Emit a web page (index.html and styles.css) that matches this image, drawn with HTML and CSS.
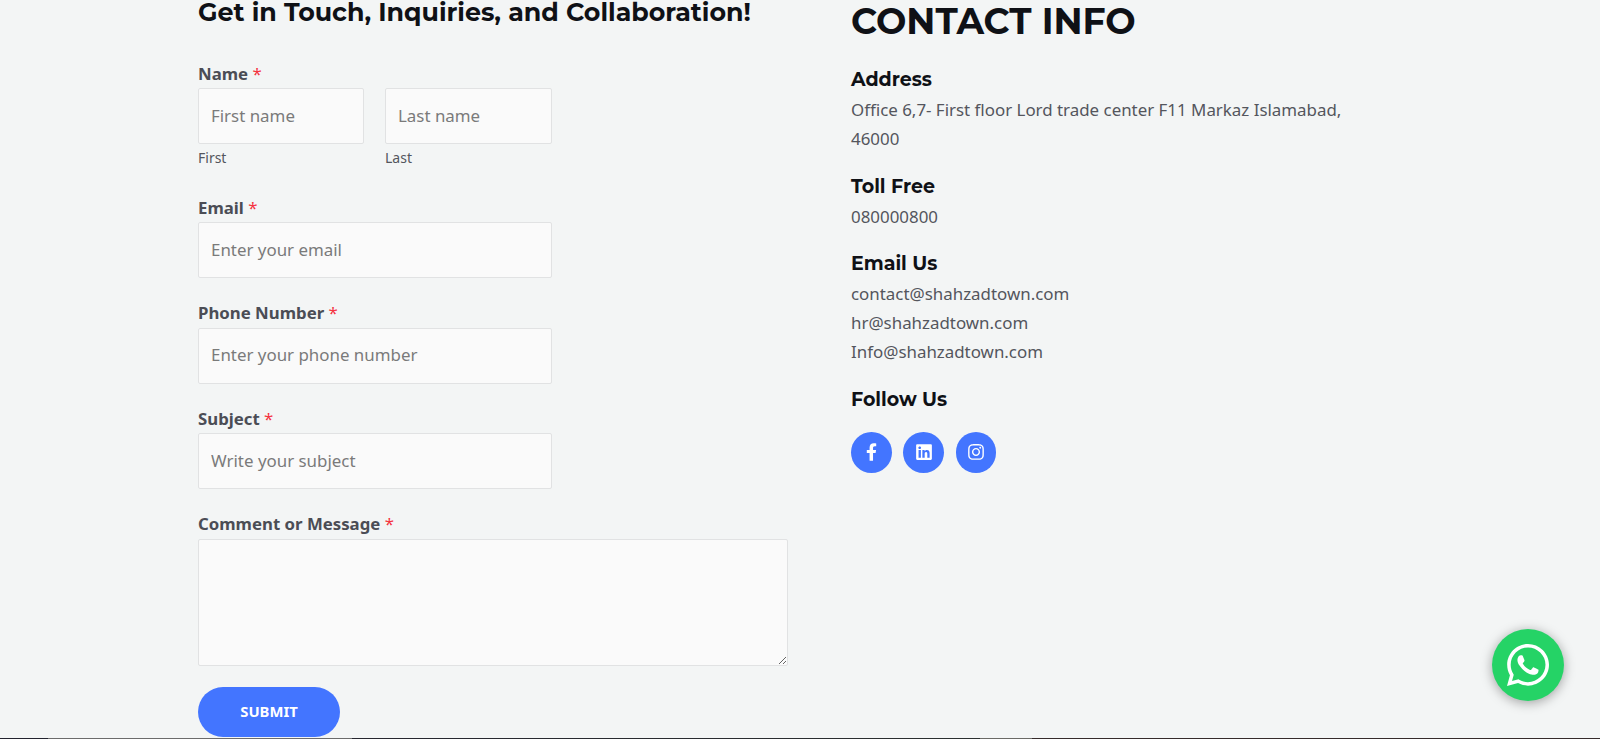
FILE: index.html
```html
<!DOCTYPE html>
<html lang="en">
<head>
<meta charset="utf-8">
<title>Contact</title>
<link rel="stylesheet" href="styles.css">
</head>
<body>
<main class="page">
  <section class="form-col">
    <h2 class="form-title">Get in Touch, Inquiries, and Collaboration!</h2>
    <form class="form">
      <div class="field">
        <label class="label">Name <span class="req">*</span></label>
        <div class="name-row">
          <div class="name-part">
            <input class="input" type="text" placeholder="First name">
            <span class="sub">First</span>
          </div>
          <div class="name-part">
            <input class="input" type="text" placeholder="Last name">
            <span class="sub">Last</span>
          </div>
        </div>
      </div>
      <div class="field">
        <label class="label">Email <span class="req">*</span></label>
        <input class="input short" type="text" placeholder="Enter your email">
      </div>
      <div class="field">
        <label class="label">Phone Number <span class="req">*</span></label>
        <input class="input short" type="text" placeholder="Enter your phone number">
      </div>
      <div class="field">
        <label class="label">Subject <span class="req">*</span></label>
        <input class="input short" type="text" placeholder="Write your subject">
      </div>
      <div class="field field-last">
        <label class="label">Comment or Message <span class="req">*</span></label>
        <textarea class="textarea"></textarea>
      </div>
      <button class="submit" type="button">SUBMIT</button>
    </form>
  </section>
  <section class="info-col">
    <h1 class="info-title">CONTACT INFO</h1>
    <h3 class="info-head">Address</h3>
    <p class="info-text">Office 6,7- First floor Lord trade center F11 Markaz Islamabad, 46000</p>
    <h3 class="info-head">Toll Free</h3>
    <p class="info-text">080000800</p>
    <h3 class="info-head">Email Us</h3>
    <p class="info-text">contact@shahzadtown.com<br>hr@shahzadtown.com<br>Info@shahzadtown.com</p>
    <h3 class="info-head">Follow Us</h3>
    <div class="socials">
      <a class="social" href="#" aria-label="Facebook">
        <svg class="fb" viewBox="0 0 320 512"><path d="M279.14 288l14.22-92.66h-88.91v-60.13c0-25.35 12.42-50.06 52.24-50.06h40.42V6.26S260.43 0 225.36 0c-73.22 0-121.08 44.38-121.08 124.72v70.62H22.89V288h81.39v224h100.17V288z"/></svg>
      </a>
      <a class="social" href="#" aria-label="LinkedIn">
        <svg class="li" viewBox="0 0 448 512"><path d="M416 32H31.9C14.3 32 0 46.5 0 64.3v383.4C0 465.5 14.3 480 31.9 480H416c17.6 0 32-14.5 32-32.3V64.3c0-17.8-14.4-32.3-32-32.3zM135.4 416H69V202.2h66.5V416zm-33.2-243c-21.3 0-38.5-17.3-38.5-38.5S80.9 96 102.2 96c21.2 0 38.5 17.3 38.5 38.5 0 21.3-17.2 38.5-38.5 38.5zm282.1 243h-66.4V312c0-24.8-.5-56.7-34.5-56.7-34.6 0-39.9 27-39.9 54.9V416h-66.4V202.2h63.7v29.2h.9c8.9-16.8 30.6-34.5 62.9-34.5 67.2 0 79.7 44.3 79.7 101.9V416z"/></svg>
      </a>
      <a class="social" href="#" aria-label="Instagram">
        <svg class="ig" viewBox="0 0 448 512"><path d="M224.1 141c-63.6 0-114.9 51.3-114.9 114.9s51.3 114.9 114.9 114.9S339 319.5 339 255.9 287.7 141 224.1 141zm0 189.6c-41.1 0-74.7-33.5-74.7-74.7s33.5-74.7 74.7-74.7 74.7 33.5 74.7 74.7-33.6 74.7-74.7 74.7zm146.4-194.3c0 14.9-12 26.8-26.8 26.8-14.9 0-26.8-12-26.8-26.8s12-26.8 26.8-26.8 26.8 12 26.8 26.8zm76.1 27.2c-1.7-35.9-9.9-67.7-36.2-93.9-26.2-26.2-58-34.4-93.9-36.2-37-2.1-147.9-2.1-184.9 0-35.8 1.7-67.6 9.9-93.9 36.1s-34.4 58-36.2 93.9c-2.1 37-2.1 147.9 0 184.9 1.7 35.9 9.9 67.7 36.2 93.9s58 34.4 93.9 36.2c37 2.1 147.9 2.1 184.9 0 35.9-1.7 67.7-9.9 93.9-36.2 26.2-26.2 34.4-58 36.2-93.9 2.1-37 2.1-147.8 0-184.8zM398.8 388c-7.8 19.6-22.9 34.7-42.6 42.6-29.5 11.7-99.5 9-132.1 9s-102.7 2.6-132.1-9c-19.6-7.8-34.7-22.9-42.6-42.6-11.7-29.5-9-99.5-9-132.1s-2.6-102.7 9-132.1c7.8-19.6 22.9-34.7 42.6-42.6 29.5-11.7 99.5-9 132.1-9s102.7-2.6 132.1 9c19.6 7.8 34.7 22.9 42.6 42.6 11.7 29.5 9 99.5 9 132.1s2.7 102.7-9 132.1z"/></svg>
      </a>
    </div>
  </section>
</main>
<div class="footer-edge"></div>
<a class="whatsapp" href="#" aria-label="WhatsApp">
  <svg viewBox="0 0 448 512"><path d="M380.9 97.1C339 55.1 283.2 32 223.9 32c-122.4 0-222 99.6-222 222 0 39.1 10.2 77.3 29.6 111L0 480l117.7-30.9c32.4 17.7 68.9 27 106.1 27h.1c122.3 0 224.1-99.6 224.1-222 0-59.3-25.2-115-67.1-157zm-157 341.6c-33.2 0-65.7-8.9-94-25.7l-6.7-4-69.8 18.3L72 359.2l-4.4-7c-18.5-29.4-28.2-63.3-28.2-98.2 0-101.7 82.8-184.5 184.6-184.5 49.3 0 95.6 19.2 130.4 54.1 34.8 34.9 56.2 81.2 56.1 130.5 0 101.8-84.9 184.6-186.6 184.6zm101.2-138.2c-5.5-2.8-32.8-16.2-37.9-18-5.1-1.9-8.8-2.8-12.5 2.8-3.7 5.6-14.3 18-17.6 21.8-3.2 3.7-6.5 4.2-12 1.4-32.6-16.3-54-29.1-75.5-66-5.7-9.8 5.7-9.1 16.3-30.3 1.8-3.7.9-6.9-.5-9.7-1.4-2.8-12.5-30.1-17.1-41.2-4.5-10.8-9.1-9.3-12.5-9.5-3.2-.2-6.9-.2-10.6-.2-3.7 0-9.7 1.4-14.8 6.9-5.1 5.6-19.4 19-19.4 46.3 0 27.3 19.9 53.7 22.6 57.4 2.8 3.7 39.1 59.7 94.8 83.8 35.2 15.2 49 16.5 66.6 13.9 10.7-1.6 32.8-13.4 37.4-26.4 4.6-13 4.6-24.1 3.2-26.4-1.3-2.5-5-3.9-10.5-6.6z"/></svg>
</a>
</body>
</html>
```
FILE: styles.css
```css
* { box-sizing: border-box; }
html, body { margin: 0; height: 739px; overflow: hidden; }
body {
  background: #f3f5f5;
  color: #54565d;
  font-family: "Noto Sans", sans-serif;
  font-size: 16.9px;
  display: flex;
  flex-direction: column;
}
.page {
  flex: 1;
  display: flex;
  gap: 63px;
  padding-left: 198px;
  min-height: 0;
}
.form-col { width: 590px; }
.info-col { width: 510px; }
.form-title {
  margin: 0 0 36.5px;
  font-family: Montserrat, Inter, sans-serif;
  font-size: 25.3px;
  line-height: 24px;
  font-weight: 700;
  color: #0f1116;
}
.label {
  display: block;
  padding-bottom: 2.5px;
  font-size: 16.8px;
  font-weight: 700;
  line-height: 25px;
  color: #4b4d55;
}
.req { color: #f5333f; font-weight: 400; }
.field { margin-bottom: 22px; }
.field-last { margin-bottom: 21px; }
.name-row { display: grid; grid-template-columns: 166px 167px; gap: 21px; }
.input {
  display: block;
  width: 100%;
  height: 56px;
  padding: 0 12px 2px;
  border: 1px solid #e1e2e3;
  border-radius: 2px;
  background: #fafafa;
  font: 16.9px "Noto Sans", sans-serif;
  color: #4b4d55;
}
.input::placeholder { color: #7a7a7a; opacity: 1; }
.short { width: 354px; }
.sub { display: block; margin-top: 3px; padding-bottom: 4.6px; font-size: 14px; line-height: 21px; }
.textarea {
  display: block;
  width: 590px;
  height: 127.4px;
  border: 1px solid #e1e2e3;
  border-radius: 2px;
  background: #fafafa;
}
.submit {
  display: block;
  width: 142px;
  height: 50.5px;
  padding: 0 0 3px;
  border: 0;
  border-radius: 26px;
  background: #4375ff;
  color: #fff;
  font: 700 14.8px "Noto Sans", sans-serif;
}
.info-title {
  margin: 0 0 26px;
  font-family: Montserrat, Inter, sans-serif;
  font-size: 36px;
  line-height: 42px;
  font-weight: 700;
  color: #0f1116;
}
.info-head {
  margin: 0 0 4px;
  font-family: Montserrat, Inter, sans-serif;
  font-size: 19px;
  line-height: 24px;
  font-weight: 700;
  color: #0f1116;
}
.info-text { margin: 0 0 21.2px; line-height: 28.7px; }
.socials { display: flex; gap: 11.5px; margin-top: 20px; }
.social {
  width: 40.8px;
  height: 40.8px;
  border-radius: 50%;
  background: #4375ff;
  display: flex;
  align-items: center;
  justify-content: center;
}
.social svg { fill: #fff; display: block; }
.fb { width: 11px; height: 18px; }
.li { width: 16px; height: 18px; }
.ig { width: 16px; height: 18px; }
.footer-edge {
  flex: none;
  height: 1px;
  background: linear-gradient(90deg, #22232e 48px, #6b6b6b 48px, #6b6b6b 352px, #26262f 352px, #2b3030 980px, #6a6a66 980px, #6a6a66 1032px, #352b2b 1032px);
}
.whatsapp {
  position: fixed;
  left: 1492px;
  top: 629px;
  width: 72px;
  height: 72px;
  border-radius: 50%;
  background: #25d366;
  box-shadow: 0 2px 12px rgba(0, 0, 0, .35);
  display: flex;
  align-items: center;
  justify-content: center;
}
.whatsapp svg { width: 42px; height: 48px; fill: #fff; }
```
